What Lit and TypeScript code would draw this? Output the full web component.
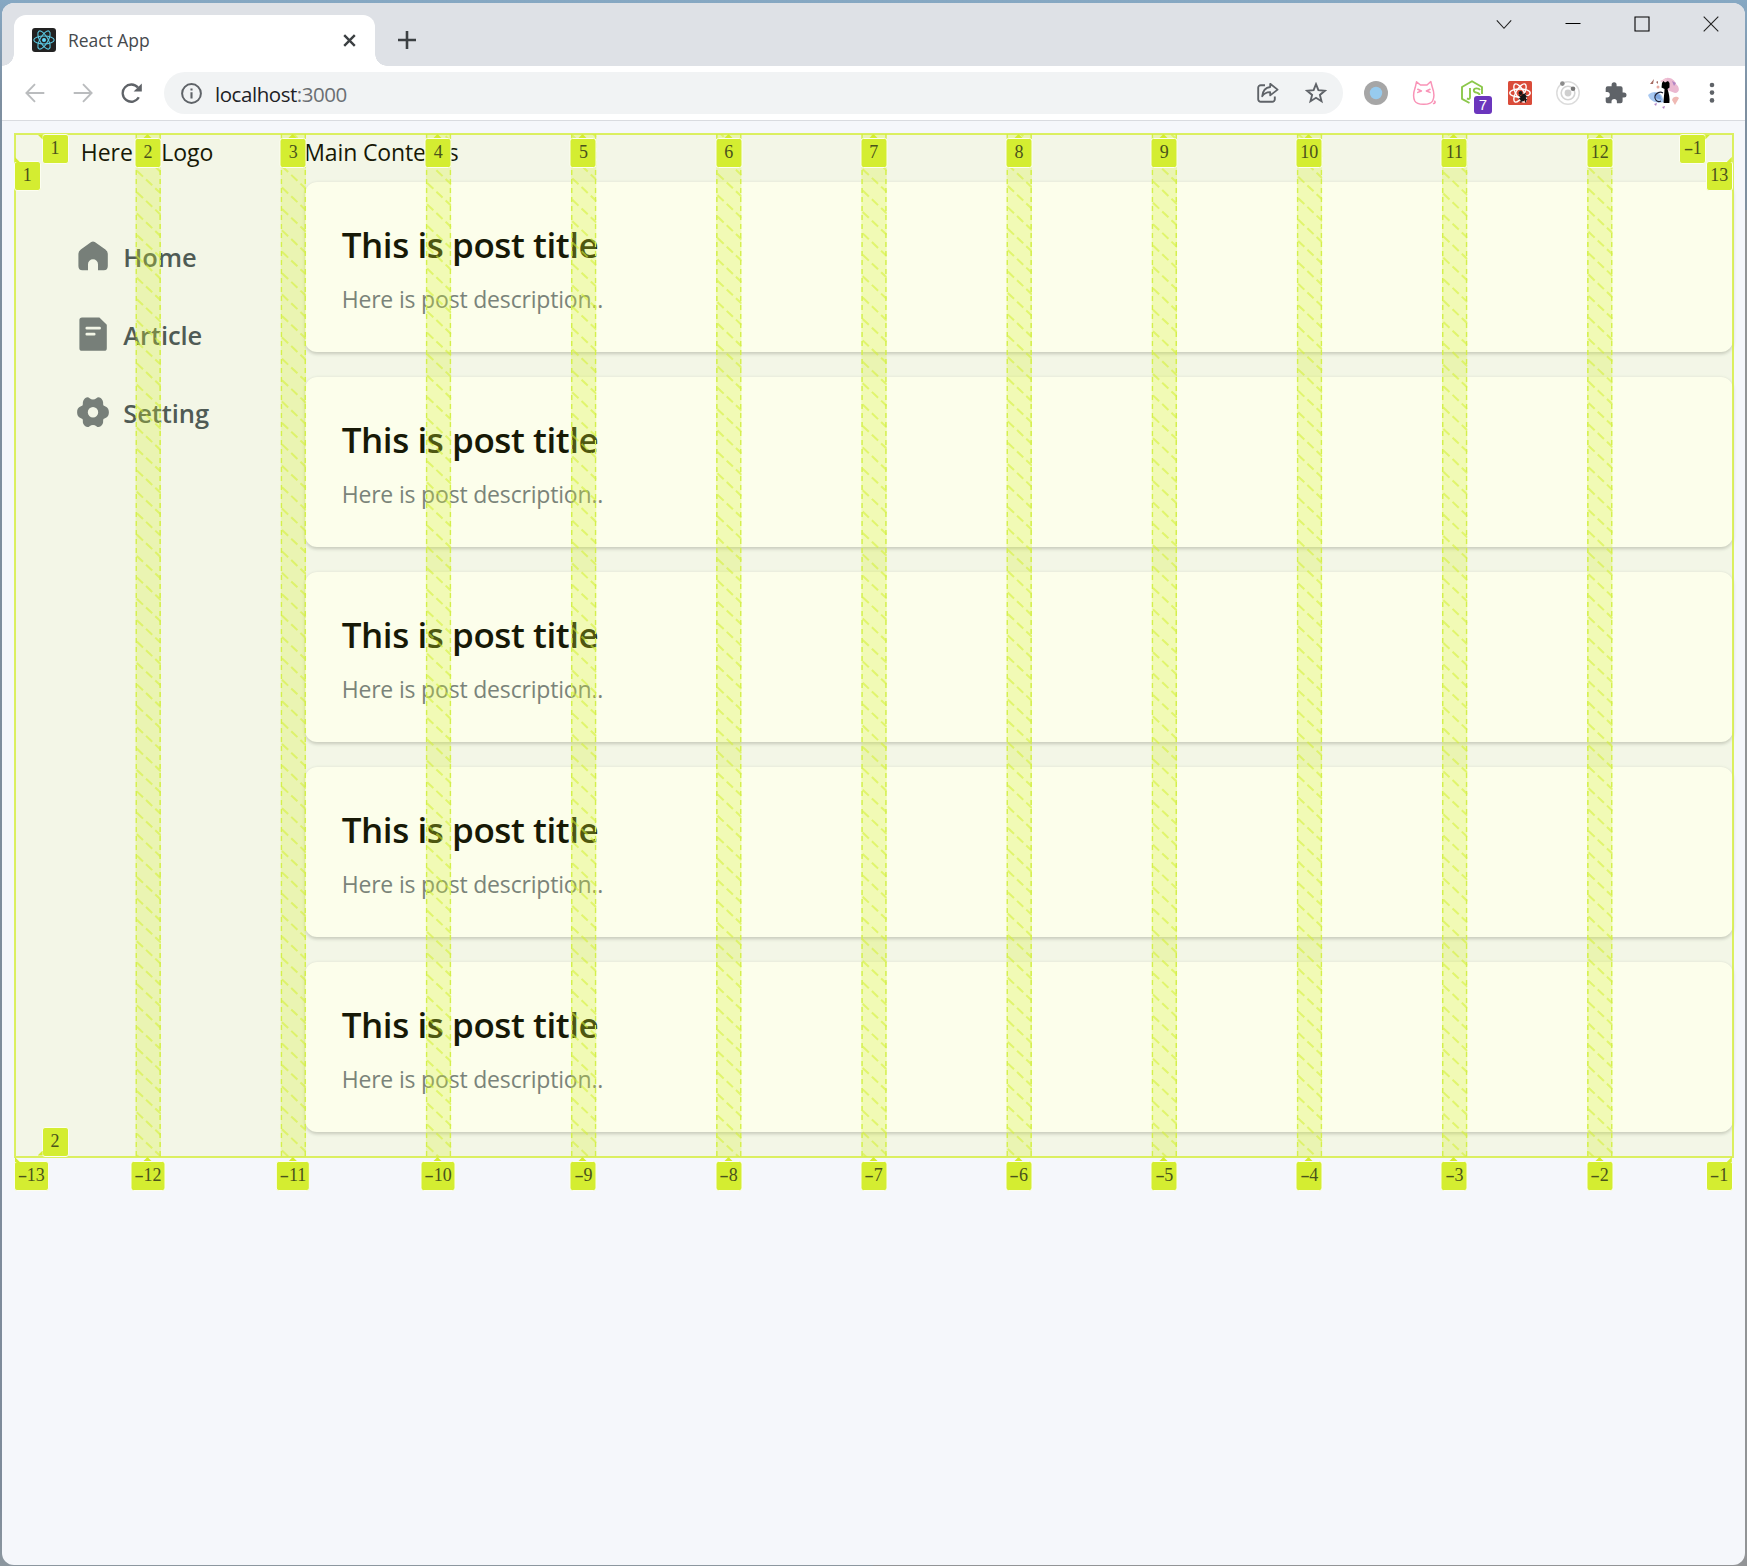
import { LitElement, html, css, svg } from "lit";
import { customElement } from "lit/decorators.js";

const POSTS = [1, 2, 3, 4, 5];
const LINES = [2, 3, 4, 5, 6, 7, 8, 9, 10, 11, 12];

const GRID_W = 1718;
const GRID_H = 1023;
const GAP = 25.6;
const STEP = (GRID_W + 24) / 12;

const icon = (w: number, h: number, body: unknown) =>
  html`<svg width=${w} height=${h} viewBox="0 0 ${w} ${h}" fill="none">${body}</svg>`;

const orbits = (color: string, width: number) => svg`
  <g stroke=${color} stroke-width=${width} fill="none">
    <ellipse cx="12" cy="12" rx="10.2" ry="4"/>
    <ellipse cx="12" cy="12" rx="10.2" ry="4" transform="rotate(60 12 12)"/>
    <ellipse cx="12" cy="12" rx="10.2" ry="4" transform="rotate(120 12 12)"/>
  </g>`;

const ICONS = {
  favicon: icon(24, 24, svg`<rect width="24" height="24" rx="3" fill="#222"/>${orbits("#5bc8e2", 1.1)}<circle cx="12" cy="12" r="2" fill="#61dafb"/>`),
  tabClose: icon(13, 13, svg`<path d="M1.2 1.2 11.8 11.8M11.8 1.2 1.2 11.8" stroke="#3c4043" stroke-width="2.4"/>`),
  plus: icon(18, 18, svg`<path d="M9 0V18M0 9H18" stroke="#3c4043" stroke-width="2.6"/>`),
  chevron: icon(16, 16, svg`<path d="M.8 4.3 8 12.3 15.2 4.3" stroke="#222" stroke-width="1.1"/>`),
  minimize: icon(16, 16, svg`<path d="M.5 7.5H15.5" stroke="#000"/>`),
  maximize: icon(16, 16, svg`<path d="M1 1H15V15H1Z" stroke="#000" stroke-width="1.1"/>`),
  close: icon(16, 16, svg`<path d="M.7 .7 15.3 15.3M15.3 .7 .7 15.3" stroke="#222" stroke-width="1.1"/>`),
  back: icon(20, 20, svg`<path d="M19.3 10H2M10 1.2 1.4 10 10 18.8" stroke="#babcbe" stroke-width="1.9"/>`),
  forward: icon(20, 20, svg`<path d="M.7 10H18M10 1.2 18.6 10 10 18.8" stroke="#babcbe" stroke-width="1.9"/>`),
  reload: icon(21, 20, svg`<path d="M17.8 14.3A8.6 8.6 0 1 1 16.9 4.6" stroke="#5f6368" stroke-width="2.3"/><path d="M20.8 .4V8.6H12.6Z" fill="#5f6368"/>`),
  info: icon(21, 21, svg`<circle cx="10.5" cy="10.5" r="9.4" stroke="#5f6368" stroke-width="2"/><path d="M10.5 9.2V15.6M10.5 5.4V7.6" stroke="#5f6368" stroke-width="2.1"/>`),
  share: icon(22, 22, svg`<path d="M8 3.2H4A2.6 2.6 0 0 0 1.2 5.9V17A2.6 2.6 0 0 0 3.9 19.8H15A2.6 2.6 0 0 0 17.8 17V14.4" stroke="#5f6368" stroke-width="1.9"/><path d="M13.2 1.8 20.6 7.6 13.2 13.4V10.2C9 10 7 11.7 5.2 14.3 5.7 9.3 8.2 5.6 13.2 5Z" stroke="#5f6368" stroke-width="1.8" stroke-linejoin="round"/>`),
  star: icon(22, 22, svg`<path d="M11 2.2 13.4 8.2 19.9 8.7 14.9 12.9 16.5 19.2 11 15.8 5.5 19.2 7.1 12.9 2.1 8.7 8.6 8.2Z" stroke="#5f6368" stroke-width="1.9"/>`),
  dot: icon(24, 24, svg`<circle cx="12" cy="12" r="12" fill="#a6a6a6"/><circle cx="12" cy="12" r="6.2" fill="#97cbee"/>`),
  cat: icon(24, 26, svg`<g stroke="#f993b7" stroke-width="1.5" stroke-linecap="round" stroke-linejoin="round"><path d="M3.2 7.6 4.5 1.8 8.5 5H15L18.8 1.5 20.4 7.6C22 12 22.7 17 20.6 21 19 24 15 24.2 12 24.2 8.5 24.2 4.6 24.4 2.8 21 .8 17 1.6 12 3.2 7.6Z"/><path d="M5.8 9.3 9.4 11 5.8 12.4M18 9.3 14.4 11 18 12.4M21.6 23.6C23 23.4 23.6 22 22.6 21.2"/></g>`),
  node: icon(24, 26, svg`<g stroke="#8cc84b" stroke-width="1.9" stroke-linejoin="round"><path d="M9.5 23 2 18.8V7L12 1.2 22 7V14"/><path d="M10 8V17.2C10 19 8.6 19.4 7 18.4M20 10C19 8 13.8 7.6 13.8 10.4 13.8 13.4 19.6 12 19.6 15"/></g>`),
  redReact: icon(24, 24, svg`<rect width="24" height="24" rx="1.5" fill="#da4c3a"/>${orbits("#fff", 1.4)}<g stroke="#161616" stroke-width="1.2"><ellipse cx="15" cy="16.6" rx="2" ry="3.4" fill="#161616" transform="rotate(25 15 16.6)"/><path d="M11 14.5 19 19M10.5 18 19.5 15.5M12.5 21.5 17.5 12M17.5 21.5V17"/></g><circle cx="12.6" cy="12" r="2" fill="#161616"/>`),
  rings: icon(24, 24, svg`<circle cx="12" cy="12" r="11.2" stroke="#dcdcdc" stroke-width="1.5"/><circle cx="12" cy="12" r="6.8" stroke="#d3d3d3" stroke-width="1.6"/><circle cx="12" cy="12" r="3.4" fill="#cfcfcf"/><circle cx="6.4" cy="2.6" r="2.3" fill="#8b8b8b"/><circle cx="17" cy="7.8" r="2.3" fill="#777"/>`),
  puzzle: icon(22, 22, svg`<path fill="#5f6368" d="M19 10.4H17.6V6.2A2 2 0 0 0 15.6 4.2H11.6V2.8A2.5 2.5 0 0 0 6.6 2.8V4.2H2.7A2 2 0 0 0 .7 6.2V10H2.1A2.7 2.7 0 0 1 2.1 15.4H.7V19.2A2 2 0 0 0 2.7 21.2H6.5V19.8A2.7 2.7 0 0 1 11.9 19.8V21.2H15.6A2 2 0 0 0 17.6 19.2V15.4H19A2.5 2.5 0 0 0 19 10.4Z"/>`),
  avatar: icon(34, 34, svg`<path d="M16 4C20-1 28 3 29 8 33 11 33 17 28 17L20 14Z" fill="#eab8d0"/><path d="M13 5 20 2 18 8Z" fill="#f3c6d6"/><path d="M1 19C5 15 12 15 15 20L17 26C11 28 3 26 1 19Z" fill="#a9c9f1"/><path d="M7 17 13 19 15 24 8 22Z" fill="#7fa7e0"/><path d="M14 25C10 27 7 23 8 20 9 17 13 15 16 17" stroke="#1d1f33" stroke-width="1.1"/><path d="M15 7 16.5 5 18 6.5 21 5 22.5 7V11.5L20.5 13C22 18 23 22 22.4 27H16.6C16.5 22 17.5 17 17.5 13L14.5 11.5Z" fill="#000"/><path d="M3 8 7 3 6 8ZM9 6 11 5 11 8Z" fill="#a36a60"/><path d="M25 24C26 20 30 20 32 22L28 29Z" fill="#efb9b4"/><path d="M7 28 10 27 9 30ZM15 31 18 30 17 33ZM25 5 29 7 27 10Z" fill="#b285c4"/><circle cx="11" cy="11" r="1.5" fill="#e8a9a0"/>`),
  dots: icon(6, 22, svg`<g fill="#5f6368"><circle cx="3" cy="3" r="2.3"/><circle cx="3" cy="10.6" r="2.3"/><circle cx="3" cy="18.4" r="2.3"/></g>`),
  home: icon(32, 36, svg`<path fill="#6b7280" d="M14.2 3.1Q16 1.9 17.8 3.1L28.4 10.4Q30.8 12 30.8 14.8V27Q30.8 31.2 26.8 31.2H21V25.2A5 5 0 0 0 11 25.2V31.2H5.4Q1.4 31.2 1.4 27V14.8Q1.4 12 3.8 10.4Z"/>`),
  article: icon(32, 36, svg`<path fill="#6b7280" d="M4.4 .4H22.4L29.8 7.8V31.2Q29.8 33.8 27.2 33.8H5Q2.4 33.8 2.4 31.2V3Q2.4 .4 5 .4Z"/><path d="M9.8 11.2H22.6M9.8 17.2H17.2" stroke="#f5f7fb" stroke-width="2.7" stroke-linecap="round"/>`),
  setting: icon(32, 36, svg`<path fill="#6b7280" fill-rule="evenodd" transform="translate(0 -.8)" d="M6.4 6.2C8.4 2.6 11.2 2.6 12.6 4 14.6 5.6 17.4 5.6 19.4 4 21 2.4 24 3 25.6 6.2 26.6 8.2 25.8 9.6 26.4 11 27.2 12.6 31.9 11.6 31.9 18 31.9 24.4 27.2 23.4 26.4 25 25.8 26.4 26.6 27.8 25.6 29.8 24 33 21 33.6 19.4 32 17.4 30.4 14.6 30.4 12.6 32 11 33.6 8 33 6.4 29.8 5.4 27.8 6.2 26.4 5.6 25 4.8 23.4 .1 24.4 .1 18 .1 11.6 4.8 12.6 5.6 11 6.2 9.6 5.4 8.2 6.4 6.2ZM16 12.8A5.2 5.2 0 1 0 16 23.2 5.2 5.2 0 1 0 16 12.8Z"/>`),
};

const MENU = [
  { label: "Home", icon: ICONS.home },
  { label: "Article", icon: ICONS.article },
  { label: "Setting", icon: ICONS.setting },
];

@customElement("app-root")
export class AppRoot extends LitElement {
  static styles = css`
    * { box-sizing: border-box; }
    :host { display: block; box-sizing: border-box; height: 1566px; padding: 3px 2px 1px; overflow: hidden; font-family: "Open Sans", "Noto Sans", sans-serif; background: linear-gradient(90deg, transparent 50%, #929496 50%) 0 210px / 100% 100% no-repeat, linear-gradient(#86a8c3, #7e8fa0 100px, #7e8b9a 1500px, #8c979f); }
    svg { display: block; flex: none; }
    .window { height: 1562px; border-radius: 12px; overflow: hidden; background: #f5f7fb; display: flex; flex-direction: column; }
    .strip { height: 63px; background: #dee1e6; display: flex; flex: none; padding-left: 12px; align-items: flex-start; }
    .tab { margin-top: 12px; height: 51px; width: 361px; background: #fff; border-radius: 12px 12px 0 0; display: flex; align-items: center; padding: 0 19px 1px 18px; position: relative; }
    .tab::before, .tab::after { content: ""; position: absolute; bottom: 0; width: 12px; height: 12px; }
    .tab::before { left: -12px; background: radial-gradient(circle at 0 0, transparent 11.5px, #fff 12px); }
    .tab::after { right: -12px; background: radial-gradient(circle at 100% 0, transparent 11.5px, #fff 12px); }
    .tabname { font-size: 17.5px; color: #45494d; margin-left: 12px; flex: 1; line-height: 24px; letter-spacing: -0.05px; }
    .plus { margin: 28px 0 0 23px; }
    .wincontrols { margin-left: auto; display: flex; gap: 53px; padding: 13px 26.5px 0 0; }
    .toolbar { height: 55px; flex: none; background: #fff; border-bottom: 1px solid #d9dbe0; display: flex; align-items: center; padding-left: 23px; }
    .nav { display: flex; gap: 28px; }
    .omni { margin-left: 22px; height: 42px; width: 1179px; border-radius: 21px; background: #f1f3f4; display: flex; align-items: center; padding: 0 16px 0 17px; }
    .url { font-size: 20.5px; margin-left: 13px; padding-top: 1px; color: #202124; flex: 1; line-height: 28px; letter-spacing: -0.45px; }
    .port { color: #6b6f73; }
    .omniicons { display: flex; gap: 26px; }
    .exts { margin-left: 9px; display: grid; grid-template-columns: repeat(8, 48px); justify-items: center; align-items: center; }
    .node { position: relative; }
    .seven { position: absolute; left: 14px; top: 16px; width: 18px; height: 18px; border-radius: 3px; background: #6b36bd; color: #fff; font: 15px/18px "Liberation Sans", sans-serif; text-align: center; }
    .page { padding: 13px 0 0 12.8px; }
    .grid { position: relative; width: 1718px; height: 1023px; display: grid; grid-template-columns: repeat(12, minmax(0, 1fr)); column-gap: 24px; color: #000; }
    .side { grid-column: span 2; }
    .main { grid-column: span 10; }
    .head { font-size: 23px; line-height: 37px; height: 48px; white-space: nowrap; letter-spacing: -0.15px; }
    .side .head { padding-left: 66px; letter-spacing: -0.05px; }
    .main .head { margin-left: -0.8px; }
    .menu { display: flex; flex-direction: column; gap: 39px; padding: 55px 0 0 62px; }
    .item { display: flex; align-items: center; height: 39px; gap: 14.5px; font-size: 25.5px; font-weight: 600; color: #3f4a58; white-space: nowrap; letter-spacing: -0.1px; }
    .posts { display: flex; flex-direction: column; gap: 25.5px; }
    .card { height: 169.5px; background: #fff; border-radius: 12px; box-shadow: 0 1.5px 4.5px rgba(0,0,0,.1), 0 1.5px 3px rgba(0,0,0,.1); padding: 36px 36.5px; }
    .title { font-size: 35px; font-weight: 600; line-height: 54px; letter-spacing: -0.42px; }
    .desc { font-size: 23px; line-height: 36px; margin-top: 8.5px; color: #6f7782; letter-spacing: -0.18px; }
    .overlay { position: absolute; inset: 0; background: rgba(222, 250, 55, .1); outline: 2px solid rgba(212, 238, 60, .8); outline-offset: -1px; }
    .row { position: absolute; left: 0; width: 1718px; display: grid; grid-template-columns: repeat(12, minmax(0, 1fr)); column-gap: 24px; }
    .rtop { top: 4px; }
    .rbot { top: 1027px; }
    .cell { position: relative; height: 30px; }
    .badge { position: absolute; min-width: 27px; height: 30px; padding: 0 3px; border: 1px solid #fcfef0; border-radius: 3px; background: #d4ed31; color: #4a521c; font: 18px/27px "Liberation Serif", serif; text-align: center; white-space: nowrap; }
    .minus { display: inline-block; width: 9px; transform: scaleX(1.6); }
    .mid { left: calc(100% + 12px); top: 0; transform: translateX(-50%); }
    .mid::before { content: ""; position: absolute; left: calc(50% - 4.5px); top: -5px; border: 4.5px solid transparent; border-top: 0; border-bottom-color: #d4ed31; }
    .r1 { left: 26.8px; top: -0.5px; }
    .c1 { left: -1px; top: 27px; }
    .rm1 { right: 26.5px; top: -0.5px; }
    .c13 { right: 0; top: 27px; }
    .r2 { left: 26.8px; bottom: 0.5px; }
    .cm13 { left: -1px; top: 1027px; }
    .cm1 { right: 0; top: 1027px; }
    .r1::before, .rm1::before, .r2::before, .c1::before, .c13::before, .cm13::before, .cm1::before { content: ""; position: absolute; width: 5px; height: 5px; background: #d4ed31; }
    .r1::before { left: -5px; top: 0; clip-path: polygon(0 0, 100% 0, 100% 100%); }
    .rm1::before { right: -5px; top: 0; clip-path: polygon(0 0, 100% 0, 0 100%); }
    .r2::before { left: -5px; bottom: 0; clip-path: polygon(100% 0, 100% 100%, 0 100%); }
    .c1::before, .cm13::before { left: 0; top: -5px; clip-path: polygon(0 0, 100% 100%, 0 100%); }
    .c13::before, .cm1::before { right: 0; top: -5px; clip-path: polygon(100% 0, 100% 100%, 0 100%); }
  `;

  badge(n: number, cls: string) {
    return html`<span class="badge ${cls}">${n < 0 ? html`<span class="minus">-</span>` : ""}${Math.abs(n)}</span>`;
  }

  stripes() {
    return html`<svg width=${GRID_W} height=${GRID_H} fill="none">
      ${LINES.map((_, i) => {
        const x = (i + 1) * STEP - 12 - GAP / 2;
        const first = ((14 - i * 4.6) % 21.4) - 21.4;
        const rows = Array.from({ length: 51 }, (_, k) => first + k * 21.4);
        return svg`<svg x=${x} y="0" width=${GAP} height=${GRID_H}>
          <rect width=${GAP} height=${GRID_H} fill="rgba(214,240,48,.29)"/>
          ${rows.map(y => svg`<path d="M0 ${y}L25.6 ${y + 24.2}" stroke="rgba(212,240,50,.55)" stroke-width="2" stroke-dasharray="8.5 4.2" stroke-dashoffset="-2"/>`)}
          <path d="M.8 0V1023M24.8 0V1023" stroke="#d4f04c" stroke-width="1.6" stroke-dasharray="5 4"/>
        </svg>`;
      })}
    </svg>`;
  }

  render() {
    return html`
      <div class="window">
        <div class="strip">
          <div class="tab">${ICONS.favicon}<div class="tabname">React App</div>${ICONS.tabClose}</div>
          <div class="plus">${ICONS.plus}</div>
          <div class="wincontrols">${ICONS.chevron}${ICONS.minimize}${ICONS.maximize}${ICONS.close}</div>
        </div>
        <div class="toolbar">
          <div class="nav">${ICONS.back}${ICONS.forward}${ICONS.reload}</div>
          <div class="omni">
            ${ICONS.info}
            <div class="url">localhost<span class="port">:3000</span></div>
            <div class="omniicons">${ICONS.share}${ICONS.star}</div>
          </div>
          <div class="exts">
            ${ICONS.dot}${ICONS.cat}
            <div class="node">${ICONS.node}<span class="seven">7</span></div>
            ${ICONS.redReact}${ICONS.rings}${ICONS.puzzle}${ICONS.avatar}${ICONS.dots}
          </div>
        </div>
        <div class="page">
          <div class="grid">
            <div class="side">
              <div class="head">Here is Logo</div>
              <div class="menu">${MENU.map(m => html`<div class="item">${m.icon}<span>${m.label}</span></div>`)}</div>
            </div>
            <div class="main">
              <div class="head">Main Contents</div>
              <div class="posts">
                ${POSTS.map(() => html`<div class="card"><div class="title">This is post title</div><div class="desc">Here is post description..</div></div>`)}
              </div>
            </div>
            <div class="overlay">
              ${this.stripes()}
              <div class="row rtop">${LINES.map(n => html`<div class="cell">${this.badge(n, "mid")}</div>`)}</div>
              <div class="row rbot">${LINES.map(n => html`<div class="cell">${this.badge(n - 14, "mid")}</div>`)}</div>
              ${this.badge(1, "r1")}${this.badge(1, "c1")}${this.badge(-1, "rm1")}${this.badge(13, "c13")}
              ${this.badge(2, "r2")}${this.badge(-13, "cm13")}${this.badge(-1, "cm1")}
            </div>
          </div>
        </div>
      </div>`;
  }
}
